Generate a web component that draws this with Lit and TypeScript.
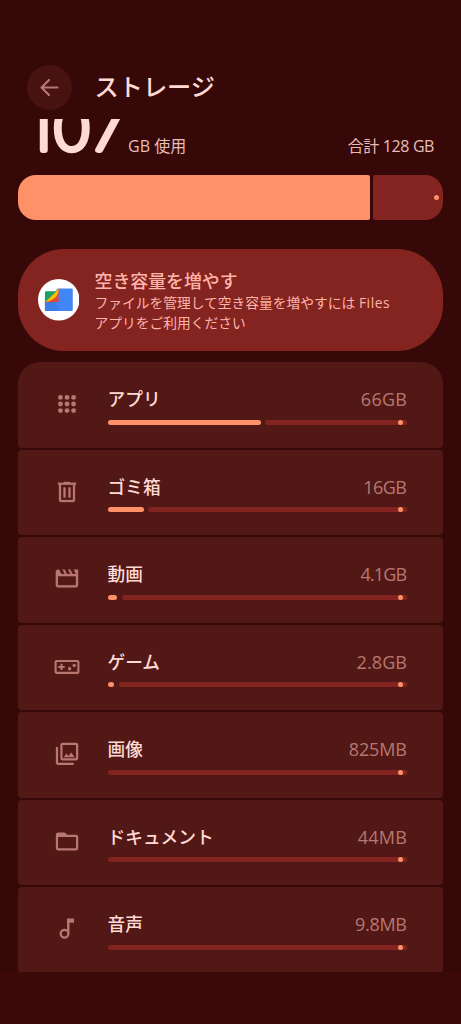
import { LitElement, html, css, svg } from "lit";
import { customElement, property } from "lit/decorators.js";

type Category = { icon: string; name: string; size: string; used: number; spacing: number };

const icons: Record<string, unknown> = {
  apps: svg`${[5.4, 12, 18.6].map((y) => [5.4, 12, 18.6].map((x) => svg`<circle cx=${x} cy=${y} r="2.4"/>`))}`,
  trash: svg`<path stroke="currentColor" stroke-width=".3" fill-rule="evenodd" d="M15 2.700V1.900H9v.8H3v2h1v15.400c0 1.100.9 2 2 2h12c1.100 0 2-.9 2-2V4.700h1v-2h-6zM18 20.100H6V4.700h12v15.400zM8.500 7.500h2v10h-2zM13.500 7.500h2v10h-2z"/>`,
  movie: svg`<path stroke="currentColor" stroke-width=".1" d="M18 4l2 4h-3l-2-4h-2l2 4h-3l-2-4H8l2 4H7L5 4H4c-1.100 0-1.990.900-1.990 2L2 18c0 1.100.900 2 2 2h16c1.100 0 2-.900 2-2V4h-4zM4 10h16v8H4v-8z" transform="translate(-1.500 -2) scale(1.120)"/>`,
  game: svg`<rect x=".6" y="6" width="22.800" height="11.900" rx="1" fill="none" stroke="currentColor" stroke-width="2.100"/><path d="M5.500 8.700h2v2.200h2.200v2H7.500v2.200h-2v-2.200H3.300v-2h2.200z"/><circle cx="14.600" cy="13.700" r="1.700"/><circle cx="19.200" cy="10.500" r="1.700"/>`,
  images: svg`<g transform="translate(-1.400 -1.600) scale(1.120)"><path d="M20 4v12H8V4h12m0-2H8c-1.100 0-2 .9-2 2v12c0 1.100.9 2 2 2h12c1.100 0 2-.9 2-2V4c0-1.100-.9-2-2-2zm-8.500 9.670l1.690 2.260 2.480-3.100L19 15H9zM2 6v14c0 1.100.9 2 2 2h14v-2H4V6H2z"/></g>`,
  folder: svg`<path transform="translate(-1.400 -2) scale(1.120)" d="M20 8v10H4V8h16M10 4H4c-1.100 0-1.990.9-1.990 2L2 18c0 1.100.9 2 2 2h16c1.100 0 2-.9 2-2V8c0-1.100-.9-2-2-2h-8l-2-2z"/>`,
  music: svg`<path fill-rule="evenodd" d="M12 1.500v10.900a5 5 0 1 0 2.500 4.300V5.800H19V1.500h-7zM9.600 14.100a2.700 2.700 0 1 1 0 5.400 2.700 2.700 0 0 1 0-5.400z"/>`,
};

@customElement("storage-row")
class StorageRow extends LitElement {
  @property({ attribute: false }) item!: Category;
  static styles = css`
    :host { display: flex; height: 85.500px; box-sizing: border-box; padding: 0 36px 0 37px; background: #511816; border-radius: 4px; color: #b87771; }
    :host(.first) { border-radius: 22px 22px 4px 4px; }
    .icon { width: 24px; height: 24px; margin: 30.300px 28.500px 0 0; fill: currentColor; overflow: visible; flex: none; }
    .body { flex: 1; padding-top: 23px; }
    .line { display: flex; justify-content: space-between; height: 28px; line-height: 28px; }
    .name { color: #ffdad5; font-size: 17.700px; font-weight: 500; }
    .size { font-family: "Open Sans", sans-serif; font-size: 18px; }
    .meter { display: flex; gap: 4.500px; margin-top: 6.600px; height: 5px; }
    .fill { background: #ff9168; border-radius: 2.500px; }
    .rest { flex: 1; background: #842420; border-radius: 2.500px; display: flex; justify-content: flex-end; padding-right: 4.500px; }
    .dot { width: 5px; height: 5px; border-radius: 50%; background: #ff9168; }
  `;
  render() {
    const i = this.item;
    return html`<svg class="icon" viewBox="0 0 24 24">${icons[i.icon]}</svg>
      <div class="body">
        <div class="line"><span class="name">${i.name}</span><span class="size" style="letter-spacing:${i.spacing}px;margin-right:${-i.spacing}px">${i.size}</span></div>
        <div class="meter">
          ${i.used ? html`<div class="fill" style="width:${i.used}px"></div>` : ""}
          <div class="rest"><div class="dot"></div></div>
        </div>
      </div>`;
  }
}

@customElement("app-root")
class AppRoot extends LitElement {
  static styles = css`
    :host { display: flex; flex-direction: column; width: 461px; height: 1024px; overflow: hidden; background: #360908; color: #ffdad5; font-family: "Open Sans", "Noto Sans CJK JP", sans-serif; }
    header { height: 119px; flex: none; box-sizing: border-box; padding: 65px 0 0 27px; display: flex; gap: 23px; }
    .back { width: 45px; height: 45px; border-radius: 50%; background: #481210; display: grid; place-items: center; color: #b87771; }
    .back svg { width: 24px; height: 24px; }
    h1 { margin: 0; font-size: 24.200px; line-height: 44px; height: 44px; font-weight: 500; margin-left: -.500px; }
    .usage { height: 56px; flex: none; display: flex; overflow: hidden; color: #e7bdb8; font-size: 16px; line-height: 24px; }
    .number { width: 128px; height: 56px; flex: none; }
    .number text { font-family: Inter, sans-serif; font-size: 60px; font-weight: 100; fill: #ffdad5; stroke: #ffdad5; stroke-width: 5.800px; stroke-linejoin: round; }
    .used { margin-top: 15px; flex: 1; }
    .total { margin: 15px 27px 0 0; letter-spacing: -.450px; word-spacing: .300px; }
    .bar { display: flex; gap: 2.500px; height: 44.500px; margin: 0 18px; flex: none; }
    .taken { width: 352px; background: #ff9168; border-radius: 18px 2px 2px 18px; }
    .free { flex: 1; background: #842420; border-radius: 2px 18px 18px 2px; display: flex; align-items: center; justify-content: flex-end; padding-right: 4.500px; }
    .dot { width: 5px; height: 5px; border-radius: 50%; background: #ff9168; }
    .banner { margin: 29.300px 18px 11.300px; height: 102px; flex: none; box-sizing: border-box; border-radius: 46px; background: #842420; display: flex; align-items: center; padding-left: 19.500px; color: #ffb4a9; }
    .logo { width: 41.500px; height: 41.500px; margin-right: 15.500px; flex: none; }
    h2 { margin: 2.500px 0 0; font-size: 17.900px; line-height: 24px; font-weight: 500; }
    p { margin: 0; font-size: 13.750px; line-height: 20px; white-space: nowrap; }
    .latin { letter-spacing: .600px; }
    .list { margin: 0 18px; display: flex; flex-direction: column; gap: 2px; flex: none; }
    footer { margin-top: -1px; flex: 1; background: #3a0908; }
  `;
  private items: Category[] = [
    { icon: "apps", name: "アプリ", size: "66GB", used: 153, spacing: 0.3 },
    { icon: "trash", name: "ゴミ箱", size: "16GB", used: 36, spacing: -0.5 },
    { icon: "movie", name: "動画", size: "4.1GB", used: 9.5, spacing: -0.9 },
    { icon: "game", name: "ゲーム", size: "2.8GB", used: 6.5, spacing: 0.1 },
    { icon: "images", name: "画像", size: "825MB", used: 0, spacing: -0.1 },
    { icon: "folder", name: "ドキュメント", size: "44MB", used: 0, spacing: 0.3 },
    { icon: "music", name: "音声", size: "9.8MB", used: 0, spacing: -0.3 },
  ];
  render() {
    return html`
      <header>
        <div class="back"><svg viewBox="0 0 24 24" fill="none" stroke="currentColor" stroke-width="2.2" stroke-linecap="round" stroke-linejoin="round"><path d="M19.500 11.500H4M11 4L3.500 11.500l7.500 7.500"/></svg></div>
        <h1>ストレージ</h1>
      </header>
      <div class="usage">
        <svg class="number" viewBox="0 0 128 56"><g transform="scale(1.1 1)"><text x="25.2 47.4 82.4" y="31">107</text></g></svg>
        <span class="used">GB 使用</span><span class="total">合計 128 GB</span>
      </div>
      <div class="bar"><div class="taken"></div><div class="free"><div class="dot"></div></div></div>
      <div class="banner">
        <svg class="logo" viewBox="0 0 42 42">
          <circle cx="21" cy="21" r="21" fill="#fff"/>
          <path d="M7 23.500L20 9.500h14q1.200 0 1.200 1.200v20.500q0 1.200-1.200 1.200H8.200Q7 32.400 7 31.200z" fill="#4285f4"/>
          <path d="M7 23.500l10-1 5 9.900H8.200Q7 32.400 7 31.200z" fill="#3d7de8"/>
          <path d="M20.800 9.500v13.800L7 23.500z" fill="#e0483a"/>
          <path d="M20.800 9.500q.300 7-4.800 10.500-3 2.500-9 3.500z" fill="#fbbc05"/>
          <path d="M8.200 12.500H18.500L7 23.500v-9.800q0-1.200 1.200-1.200z" fill="#1ba261"/>
        </svg>
        <div><h2>空き容量を増やす</h2><p>ファイルを管理して空き容量を増やすには <span class="latin">Files</span><br>アプリをご利用ください</p></div>
      </div>
      <div class="list">${this.items.map((it, n) => html`<storage-row class=${n ? "" : "first"} .item=${it}></storage-row>`)}</div>
      <footer></footer>`;
  }
}
